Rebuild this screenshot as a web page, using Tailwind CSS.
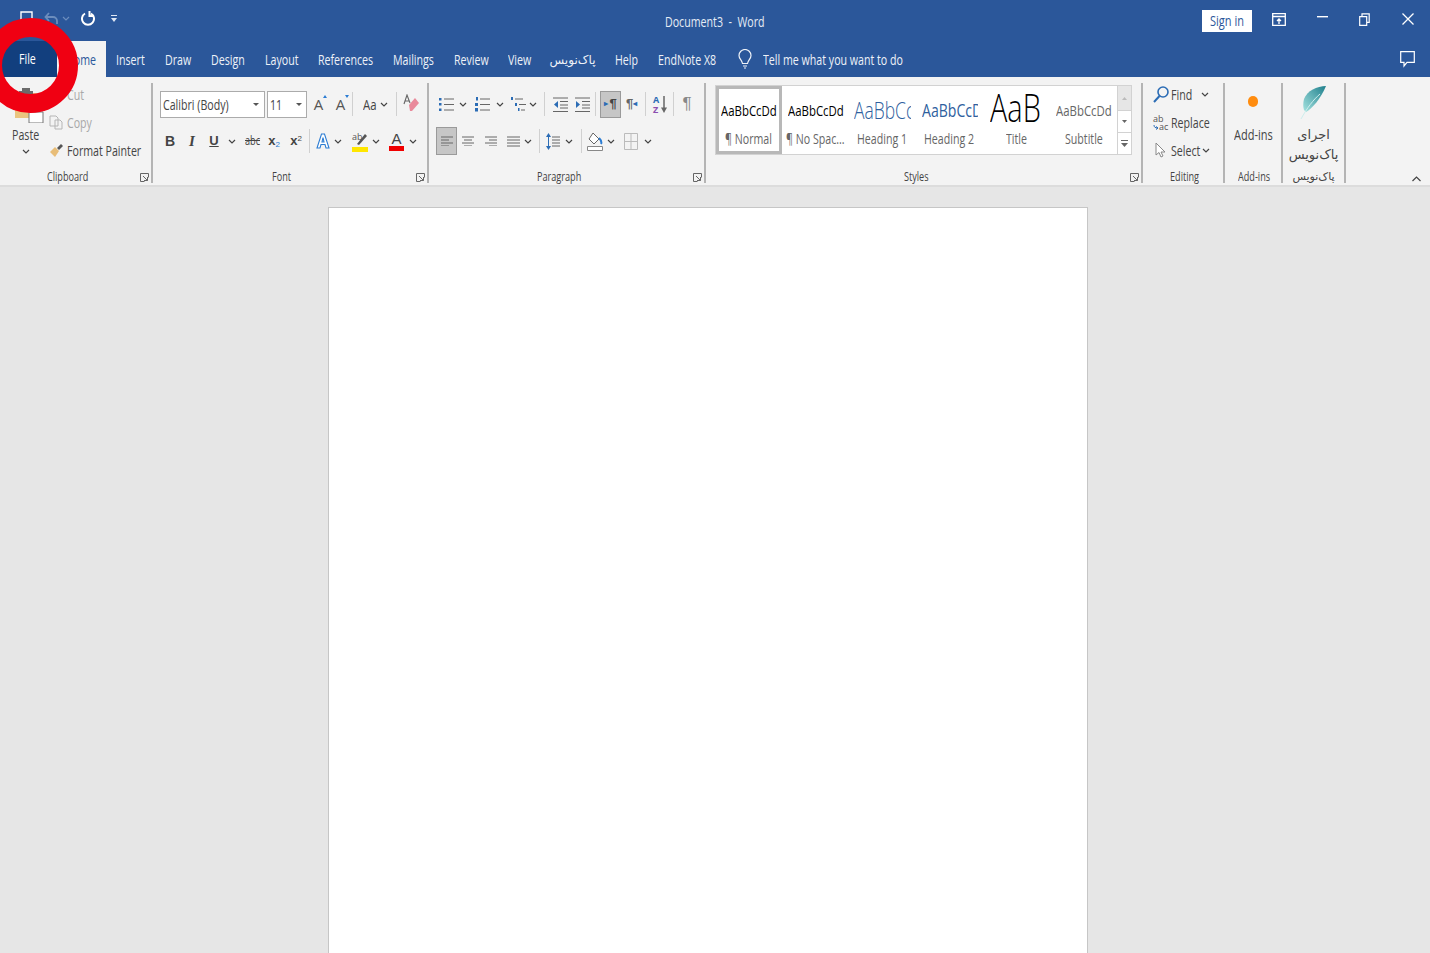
<!DOCTYPE html>
<html lang="en">
<head>
  <meta charset="UTF-8">
  <title>Document3 - Word</title>
  <script src="https://cdn.jsdelivr.net/npm/@tailwindcss/browser@4"></script>
</head>
<body class="h-screen overflow-hidden bg-[#e6e6e6] font-['Open_Sans','DejaVu_Sans',sans-serif] text-[#444]">
  <div class="relative flex h-screen flex-col">

    <!-- Title bar -->
    <div class="grid h-[41px] grid-cols-[1fr_auto_1fr] items-center bg-[#2b579a] text-white">
      <div class="flex items-center pl-[20px] pb-[5px]">
        <svg class="h-[14px] w-[13px]" viewBox="0 0 13 14"><path d="M1 1h11v12H1z" fill="none" stroke="#fff" stroke-width="1.4"/></svg>
        <svg class="ml-[11px] h-[14px] w-[15px]" viewBox="0 0 15 14"><path d="M5 2 1.500 6 5 10M2 6h7a4 4 0 0 1 4 4v3" fill="none" stroke="#6c8dbd" stroke-width="1.800"/></svg>
        <svg class="ml-[3px] h-[5px] w-[8px]" viewBox="0 0 8 5"><path d="m1 1 3 3 3-3" fill="none" stroke="#6c8dbd" stroke-width="1.200"/></svg>
        <svg class="ml-[11px] h-[16px] w-[14px]" viewBox="0 0 14 16"><path d="M4 3.500a6 6 0 1 0 6 0M8.500 1v5h4" fill="none" stroke="#fff" stroke-width="2"/></svg>
        <svg class="ml-[16px] h-[7px] w-[6px]" viewBox="0 0 6 7"><path d="M0 0h6v1H0zM0 3h6L3 7z" fill="#dfe7f3"/></svg>
      </div>
      <div class="pt-[2px] text-[14px] text-[#e6ecf5]"><span class="sq inline-block origin-left scale-x-[.76] whitespace-nowrap">Document3&nbsp; -&nbsp; Word</span></div>
      <div class="flex items-center justify-end pb-[1px]">
        <div class="mt-[2px] mr-[20px] flex h-[22px] w-[50px] items-center justify-center bg-white text-[14.500px] text-[#2b579a]"><span class="sq inline-block origin-left scale-x-[.76] whitespace-nowrap">Sign in</span></div>
        <svg class="mb-[2px] h-[13px] w-[14px]" viewBox="0 0 14 13"><path d="M.700.700h12.600v11.600H.700zM.700 3.500h12.600M7 11V6M5 8l2-2 2 2" fill="none" stroke="#fff" stroke-width="1.300"/></svg>
        <svg class="ml-[31px] mb-[6px] h-[2px] w-[11px]" viewBox="0 0 11 2"><path d="M0 0h11v1.400H0z" fill="#fff"/></svg>
        <svg class="ml-[31px] mb-[2px] h-[13px] w-[11px]" viewBox="0 0 11 13"><path d="M.700 3.700h7v8.600h-7zM3 3.500V.800h7.200v8.500H8" fill="none" stroke="#fff" stroke-width="1.200"/></svg>
        <svg class="ml-[32px] mr-[16px] mb-[3px] h-[12px] w-[12px]" viewBox="0 0 12 12"><path d="m.500.500 11 11m0-11-11 11" stroke="#fff" stroke-width="1.300"/></svg>
      </div>
    </div>

    <!-- Tabs -->
    <div class="flex h-[36px] items-stretch bg-[#2b579a] text-[14px] text-[#eef2f8]">
      <div class="flex w-[57px] items-center justify-center bg-[#123f7e] pr-[3px] pb-[2px] text-white"><span class="sq inline-block origin-left scale-x-[.76] whitespace-nowrap">File</span></div>
      <div class="flex w-[49px] items-center justify-center bg-[#f3f3f3] pt-[1px] text-[#2b579a]"><span class="sq inline-block origin-left scale-x-[.76] whitespace-nowrap">Home</span></div>
      <div class="flex items-center px-[10px] pt-[1px]"><span class="sq inline-block origin-left scale-x-[.76] whitespace-nowrap">Insert</span></div>
      <div class="flex items-center px-[10px] pt-[1px]"><span class="sq inline-block origin-left scale-x-[.76] whitespace-nowrap">Draw</span></div>
      <div class="flex items-center px-[10px] pt-[1px]"><span class="sq inline-block origin-left scale-x-[.76] whitespace-nowrap">Design</span></div>
      <div class="flex items-center px-[10px] pt-[1px]"><span class="sq inline-block origin-left scale-x-[.76] whitespace-nowrap">Layout</span></div>
      <div class="flex items-center px-[10px] pt-[1px]"><span class="sq inline-block origin-left scale-x-[.76] whitespace-nowrap">References</span></div>
      <div class="flex items-center px-[10px] pt-[1px]"><span class="sq inline-block origin-left scale-x-[.76] whitespace-nowrap">Mailings</span></div>
      <div class="flex items-center px-[10px] pt-[1px]"><span class="sq inline-block origin-left scale-x-[.76] whitespace-nowrap">Review</span></div>
      <div class="flex items-center px-[10px] pt-[1px]"><span class="sq inline-block origin-left scale-x-[.76] whitespace-nowrap">View</span></div>
      <div class="flex w-[65px] items-center justify-center pt-[1px] text-[12px] whitespace-nowrap" dir="rtl">پاک‌نویس</div>
      <div class="flex items-center px-[10px] pt-[1px]"><span class="sq inline-block origin-left scale-x-[.76] whitespace-nowrap">Help</span></div>
      <div class="flex items-center px-[10px] pt-[1px]"><span class="sq inline-block origin-left scale-x-[.76] whitespace-nowrap">EndNote X8</span></div>
      <div class="ml-[13px] flex items-center">
        <svg class="h-[20px] w-[14px]" viewBox="0 0 14 20"><path d="M4.500 14.500C4 11 1 10 1 6.500a6 6 0 0 1 12 0C13 10 10 11 9.500 14.500zM5 17h4M6 19h2" fill="none" stroke="#eef2f8" stroke-width="1.200"/></svg>
      </div>
      <div class="ml-[11px] flex items-center"><span class="sq inline-block origin-left scale-x-[.76] whitespace-nowrap">Tell me what you want to do</span></div>
      <div class="ml-auto mr-[15px] flex items-center">
        <svg class="h-[17px] w-[15px]" viewBox="0 0 15 17"><path d="M.700.700h13.600v10.600H7L4 15v-3.700H.700z" fill="none" stroke="#fff" stroke-width="1.200"/></svg>
      </div>
    </div>

    <!-- Ribbon -->
    <div class="flex h-[110px] items-start border-b-2 border-[#dcdcdc] bg-[#f3f3f3] text-[14px]">

      <!-- Clipboard -->
      <div class="mt-[6px] flex h-[100px] w-[153px] flex-col border-r-2 border-[#b4b4b4]">
        <div class="flex h-[86px]">
          <div class="flex w-[49px] flex-col items-center pl-[3px]">
            <svg class="mt-[3px] ml-[8px] h-[37px] w-[30px]" viewBox="0 0 30 37"><path d="M0 7h22v25H0z" fill="#eac47f"/><path d="M7 2h8v3h3v5H4V5h3z" fill="#6b6b6b"/><path d="M14 26h14v11H14z" fill="#fff" stroke="#777"/></svg>
            <div class="mt-[4px] leading-[16px]"><span class="sq inline-block origin-left scale-x-[.76] whitespace-nowrap">Paste</span></div>
            <svg class="mt-[6px] h-[5px] w-[8px]" viewBox="0 0 8 5"><path d="m1 1 3 3 3-3" fill="none" stroke="#444" stroke-width="1.200"/></svg>
          </div>
          <div class="mt-[-3px] flex flex-col">
            <div class="flex h-[28px] items-center text-[#a8a8a8]">
              <svg class="h-[15px] w-[15px]" viewBox="0 0 15 15"><path d="m3 1 7 11M10 1 3 12" fill="none" stroke="#b5b5b5" stroke-width="1.200"/></svg>
              <span class="sq ml-[3px] inline-block origin-left scale-x-[.76] whitespace-nowrap">Cut</span>
            </div>
            <div class="flex h-[28px] items-center text-[#a8a8a8]">
              <svg class="h-[15px] w-[15px]" viewBox="0 0 15 15"><path d="M1 1h6l2 2v8H1zM6 5h5l2 2v7H6z" fill="#f3f3f3" stroke="#b5b5b5"/></svg>
              <span class="sq ml-[3px] inline-block origin-left scale-x-[.76] whitespace-nowrap">Copy</span>
            </div>
            <div class="flex h-[28px] items-center">
              <svg class="h-[15px] w-[15px]" viewBox="0 0 15 15"><path d="M1 9l5-5 4 4-4 6z" fill="#e8bd78"/><path d="m8 5 4-4 2 2-4 4z" fill="#555"/></svg>
              <span class="sq ml-[3px] inline-block origin-left scale-x-[.76] whitespace-nowrap">Format Painter</span>
            </div>
          </div>
        </div>
        <div class="flex h-[14px] text-[12px] leading-[16px]">
          <div class="flex-1 pr-[6px] text-center"><span class="sq inline-block origin-left scale-x-[.76] whitespace-nowrap">Clipboard</span></div>
          <svg class="mt-[4px] mr-[2px] h-[9px] w-[9px]" viewBox="0 0 9 9"><path d="M.500 8.500v-8h8M.500 8.500h4M8.500.500v4M3 3l4.500 4.500M7.500 4v3.500H4" fill="none" stroke="#666"/></svg>
        </div>
      </div>

      <!-- Font -->
      <div class="mt-[6px] flex h-[100px] w-[276px] flex-col border-r-2 border-[#b4b4b4]">
        <div class="h-[86px] pt-[7px]">
          <div class="flex h-[28px] items-center pl-[7px]">
            <div class="flex h-[27px] w-[105px] items-center justify-between border border-[#ababab] bg-white pl-[2px] pr-[5px]">
              <span class="sq inline-block origin-left scale-x-[.76] whitespace-nowrap">Calibri (Body)</span>
              <svg class="h-[3px] w-[6px]" viewBox="0 0 6 3"><path d="M0 0h6L3 3z" fill="#555"/></svg>
            </div>
            <div class="ml-[2px] flex h-[27px] w-[40px] items-center justify-between border border-[#ababab] bg-white pl-[2px] pr-[4px]">
              <span class="sq inline-block origin-left scale-x-[.76] whitespace-nowrap">11</span>
              <svg class="h-[3px] w-[6px]" viewBox="0 0 6 3"><path d="M0 0h6L3 3z" fill="#555"/></svg>
            </div>
            <div class="ml-[6px] flex w-[15px] items-start justify-center text-[15px] text-[#555]">A<svg class="mt-[2px] h-[3px] w-[4px]" viewBox="0 0 4 3"><path d="M2 0l2 3H0z" fill="#2b7cd3"/></svg></div>
            <div class="ml-[7px] flex w-[15px] items-start justify-center text-[15px] text-[#555]">A<svg class="mt-[2px] h-[3px] w-[4px]" viewBox="0 0 4 3"><path d="M0 0h4L2 3z" fill="#2b7cd3"/></svg></div>
            <div class="ml-[2px] h-[24px] w-px bg-[#d0d0d0]"></div>
            <div class="ml-[10px] text-[15px] leading-none"><span class="sq inline-block origin-left scale-x-[.76] whitespace-nowrap">Aa</span></div>
            <svg class="ml-[4px] h-[5px] w-[8px]" viewBox="0 0 8 5"><path d="m1 1 3 3 3-3" fill="none" stroke="#444" stroke-width="1.200"/></svg>
            <div class="ml-[8px] h-[24px] w-px bg-[#d0d0d0]"></div>
            <svg class="ml-[6px] h-[20px] w-[16px]" viewBox="0 0 16 20"><path d="m6 11 6-7 4 5-7 8-2 0z" fill="#e98a9b"/><path d="M1 10 4 1l3 8M2 7h4" fill="none" stroke="#666" stroke-width="1.100"/></svg>
          </div>
          <div class="mt-[9px] flex h-[28px] items-center pl-[6px]">
            <div class="w-[22px] text-center font-['Liberation_Sans'] text-[14px] font-bold">B</div>
            <div class="w-[22px] text-center font-['Liberation_Serif'] text-[15px] font-bold italic">I</div>
            <div class="w-[22px] text-center font-['Liberation_Sans'] text-[13px] font-bold underline">U</div>
            <svg class="ml-[3px] h-[5px] w-[8px]" viewBox="0 0 8 5"><path d="m1 1 3 3 3-3" fill="none" stroke="#444" stroke-width="1.200"/></svg>
            <div class="ml-[5px] w-[22px] text-center text-[12px]"><span class="sq inline-block origin-left scale-x-[.76] whitespace-nowrap line-through">abc</span></div>
            <div class="w-[22px] text-center font-['Liberation_Sans'] text-[13px] font-bold">x<sub class="text-[8px] font-normal text-[#2b7cd3]">2</sub></div>
            <div class="w-[22px] text-center font-['Liberation_Sans'] text-[13px] font-bold">x<sup class="text-[8px] font-normal">2</sup></div>
            <div class="ml-[2px] h-[24px] w-px bg-[#d0d0d0]"></div>
            <svg class="ml-[6px] h-[20px] w-[14px]" viewBox="0 0 14 20"><path d="M5.500 3h3l4.500 14h-3l-1-3.500H5L4 17H1zM6 11h2L7 6.500z" fill="#fff" stroke="#2b7cd3" stroke-width="1.100"/></svg>
            <svg class="ml-[4px] h-[5px] w-[8px]" viewBox="0 0 8 5"><path d="m1 1 3 3 3-3" fill="none" stroke="#444" stroke-width="1.200"/></svg>
            <svg class="ml-[10px] h-[21px] w-[16px] overflow-visible" viewBox="0 0 16 21"><path d="M0 16h16v5H0z" fill="#ffe600"/><path d="M5 13 13 3l2 2-8 9z" fill="#555"/><text x="0" y="9" font-size="9" fill="#555">ab</text></svg>
            <svg class="ml-[4px] h-[5px] w-[8px]" viewBox="0 0 8 5"><path d="m1 1 3 3 3-3" fill="none" stroke="#444" stroke-width="1.200"/></svg>
            <div class="ml-[9px] flex w-[15px] flex-col items-center">
              <span class="font-['Liberation_Sans'] text-[15px] leading-[15px]">A</span>
              <span class="h-[5px] w-[15px] bg-[#f00000]"></span>
            </div>
            <svg class="ml-[5px] h-[5px] w-[8px]" viewBox="0 0 8 5"><path d="m1 1 3 3 3-3" fill="none" stroke="#444" stroke-width="1.200"/></svg>
          </div>
        </div>
        <div class="flex h-[14px] text-[12px] leading-[16px]">
          <div class="flex-1 pr-[6px] text-center"><span class="sq inline-block origin-left scale-x-[.76] whitespace-nowrap">Font</span></div>
          <svg class="mt-[4px] mr-[2px] h-[9px] w-[9px]" viewBox="0 0 9 9"><path d="M.500 8.500v-8h8M.500 8.500h4M8.500.500v4M3 3l4.500 4.500M7.500 4v3.500H4" fill="none" stroke="#666"/></svg>
        </div>
      </div>

      <!-- Paragraph -->
      <div class="mt-[6px] flex h-[100px] w-[277px] flex-col border-r-2 border-[#b4b4b4]">
        <div class="h-[86px] pt-[7px]">
          <div class="flex h-[28px] items-center pl-[10px]">
            <svg class="h-[15px] w-[15px]" viewBox="0 0 15 15"><path d="M5 2h10M5 7.500h10M5 13h10" stroke="#666"/><path d="M0 1h2.500v2.500H0zM0 6h2.500v2.500H0zM0 11.500h2.500V14H0z" fill="#2b6cb5"/></svg>
            <svg class="ml-[5px] h-[5px] w-[8px]" viewBox="0 0 8 5"><path d="m1 1 3 3 3-3" fill="none" stroke="#444" stroke-width="1.200"/></svg>
            <svg class="ml-[8px] h-[15px] w-[15px]" viewBox="0 0 15 15"><path d="M5 2h10M5 7.500h10M5 13h10" stroke="#666"/><path d="M1 0h2v3.500H1zM0 6h3v3H0zM0 11h3v3.500H0z" fill="#2b6cb5"/></svg>
            <svg class="ml-[6px] h-[5px] w-[8px]" viewBox="0 0 8 5"><path d="m1 1 3 3 3-3" fill="none" stroke="#444" stroke-width="1.200"/></svg>
            <svg class="ml-[7px] h-[15px] w-[15px]" viewBox="0 0 15 15"><path d="M4 2h8M8 7.500h7M10 13h4" stroke="#666"/><path d="M0 0h2v3H0zM4 6h2v3H4zM7 11h1.500v3H7z" fill="#2b6cb5"/></svg>
            <svg class="ml-[3px] h-[5px] w-[8px]" viewBox="0 0 8 5"><path d="m1 1 3 3 3-3" fill="none" stroke="#444" stroke-width="1.200"/></svg>
            <div class="ml-[7px] h-[24px] w-px bg-[#d0d0d0]"></div>
            <svg class="ml-[8px] h-[15px] w-[15px]" viewBox="0 0 15 15"><path d="M0 1h15M7 4.500h8M7 8h8M7 11h8M0 14.500h15" stroke="#666"/><path d="M5 4 1 7.500 5 11z" fill="#2b6cb5"/></svg>
            <svg class="ml-[7px] h-[15px] w-[15px]" viewBox="0 0 15 15"><path d="M0 1h15M7 4.500h8M7 8h8M7 11h8M0 14.500h15" stroke="#666"/><path d="M1 4l4 3.500L1 11z" fill="#2b6cb5"/></svg>
            <div class="ml-[5px] h-[24px] w-px bg-[#d0d0d0]"></div>
            <div class="ml-[4px] flex h-[27px] w-[21px] items-center justify-center border border-[#9a9a9a] bg-[#c6c6c6] font-['Liberation_Sans'] text-[13px] font-bold"><span class="mr-[1px] text-[8px] text-[#2b6cb5]">▸</span>¶</div>
            <div class="ml-[2px] flex w-[17px] items-center justify-center font-['Liberation_Sans'] text-[13px] font-bold text-[#666]">¶<span class="text-[8px] text-[#2b6cb5]">◂</span></div>
            <div class="ml-[5px] h-[24px] w-px bg-[#d0d0d0]"></div>
            <svg class="ml-[7px] h-[19px] w-[15px] overflow-visible" viewBox="0 0 15 19"><text x="0" y="8" font-size="9" font-weight="700" fill="#2b6cb5">A</text><text x="0" y="18" font-size="9" font-weight="700" fill="#8b4fb0">Z</text><path d="M11 1v15" stroke="#666" stroke-width="1.500"/><path d="M8 12.500h6L11 18z" fill="#666"/></svg>
            <div class="ml-[5px] h-[24px] w-px bg-[#d0d0d0]"></div>
            <div class="ml-[6px] w-[14px] text-center font-['Liberation_Sans'] text-[17px] text-[#888]">¶</div>
          </div>
          <div class="mt-[9px] flex h-[28px] items-center pl-[7px]">
            <div class="flex h-[28px] w-[21px] items-center justify-center border border-[#9a9a9a] bg-[#c6c6c6]">
              <svg class="h-[10px] w-[12px]" viewBox="0 0 12 10"><path d="M0 1h12M0 4h8M0 7h12M0 10h8" stroke="#666"/></svg>
            </div>
            <svg class="ml-[5px] h-[10px] w-[12px]" viewBox="0 0 12 10"><path d="M0 1h12M2 4h8M0 7h12M2 10h8" stroke="#666"/></svg>
            <svg class="ml-[11px] h-[10px] w-[12px]" viewBox="0 0 12 10"><path d="M0 1h12M4 4h8M0 7h12M4 10h8" stroke="#666"/></svg>
            <svg class="ml-[10px] h-[11px] w-[13px]" viewBox="0 0 13 11"><path d="M0 1h13M0 4h13M0 7h13M0 10h13" stroke="#666"/></svg>
            <svg class="ml-[4px] h-[5px] w-[8px]" viewBox="0 0 8 5"><path d="m1 1 3 3 3-3" fill="none" stroke="#444" stroke-width="1.200"/></svg>
            <div class="ml-[7px] h-[24px] w-px bg-[#d0d0d0]"></div>
            <svg class="ml-[6px] h-[17px] w-[14px]" viewBox="0 0 14 17"><path d="M6 4h8M6 7h8M6 10h8M6 13h8" stroke="#666"/><path d="M2.500 0 5 4H0zM0 13h5l-2.500 4zM2 4h1v9H2z" fill="#2b6cb5"/></svg>
            <svg class="ml-[5px] h-[5px] w-[8px]" viewBox="0 0 8 5"><path d="m1 1 3 3 3-3" fill="none" stroke="#444" stroke-width="1.200"/></svg>
            <div class="ml-[8px] h-[24px] w-px bg-[#d0d0d0]"></div>
            <svg class="ml-[5px] h-[19px] w-[16px]" viewBox="0 0 16 19"><path d="M.500 14.500h15v4H.500z" fill="#fff" stroke="#888"/><path d="m6 1 6 6-5 5-5-5z" fill="#fff" stroke="#666"/><path d="M12 6c2 2 3 4 2 6" fill="none" stroke="#2b7cd3" stroke-width="2"/></svg>
            <svg class="ml-[4px] h-[5px] w-[8px]" viewBox="0 0 8 5"><path d="m1 1 3 3 3-3" fill="none" stroke="#444" stroke-width="1.200"/></svg>
            <svg class="ml-[9px] h-[17px] w-[14px]" viewBox="0 0 14 17"><path d="M.500.500h13v16H.500zM7 .500v16M.500 8.500h13" fill="none" stroke="#bbb"/></svg>
            <svg class="ml-[6px] h-[5px] w-[8px]" viewBox="0 0 8 5"><path d="m1 1 3 3 3-3" fill="none" stroke="#444" stroke-width="1.200"/></svg>
          </div>
        </div>
        <div class="flex h-[14px] text-[12px] leading-[16px]">
          <div class="flex-1 pr-[6px] text-center"><span class="sq inline-block origin-left scale-x-[.76] whitespace-nowrap">Paragraph</span></div>
          <svg class="mt-[4px] mr-[2px] h-[9px] w-[9px]" viewBox="0 0 9 9"><path d="M.500 8.500v-8h8M.500 8.500h4M8.500.500v4M3 3l4.500 4.500M7.500 4v3.500H4" fill="none" stroke="#666"/></svg>
        </div>
      </div>

      <!-- Styles -->
      <div class="mt-[6px] flex h-[100px] w-[437px] flex-col border-r-2 border-[#b4b4b4]">
        <div class="h-[86px] pl-[9px] pt-[2px]">
          <div class="flex h-[70px] w-[417px] border border-[#d2d2d2] bg-white">
            <div class="flex w-[66px] flex-col items-center border-[3px] border-[#b8b8b8]">
              <div class="mt-[10px] h-[22px] text-[15px] leading-[22px] text-black"><span class="sq inline-block origin-left scale-x-[.76] whitespace-nowrap">AaBbCcDd</span></div>
              <div class="mt-[9px] leading-[18px] text-[#666]"><span class="sq inline-block origin-left scale-x-[.76] whitespace-nowrap">¶ Normal</span></div>
            </div>
            <div class="flex w-[67px] flex-col items-center pt-[13px]">
              <div class="h-[22px] text-[15px] leading-[22px] text-black"><span class="sq inline-block origin-left scale-x-[.76] whitespace-nowrap">AaBbCcDd</span></div>
              <div class="mt-[9px] leading-[18px] text-[#666]"><span class="sq inline-block origin-left scale-x-[.76] whitespace-nowrap">¶ No Spac...</span></div>
            </div>
            <div class="flex w-[67px] flex-col items-center pt-[12px]">
              <div class="h-[24px] w-[57px] overflow-hidden text-[23px] leading-[24px] font-light text-[#2f5f9e]"><span class="sq inline-block origin-left scale-x-[.76] whitespace-nowrap">AaBbCc</span></div>
              <div class="mt-[8px] leading-[18px] text-[#666]"><span class="sq inline-block origin-left scale-x-[.76] whitespace-nowrap">Heading 1</span></div>
            </div>
            <div class="flex w-[67px] flex-col items-center pt-[13px]">
              <div class="h-[22px] w-[56px] overflow-hidden text-[18.500px] leading-[22px] text-[#2f5f9e]"><span class="sq inline-block origin-left scale-x-[.76] whitespace-nowrap">AaBbCcD</span></div>
              <div class="mt-[9px] leading-[18px] text-[#666]"><span class="sq inline-block origin-left scale-x-[.76] whitespace-nowrap">Heading 2</span></div>
            </div>
            <div class="flex w-[67px] flex-col items-center pt-[7px]">
              <div class="h-[29px] w-[54px] overflow-hidden text-[38px] leading-[29px] font-light text-black"><span class="sq inline-block origin-left scale-x-[.76] whitespace-nowrap">AaB</span></div>
              <div class="mt-[8px] leading-[18px] text-[#666]"><span class="sq inline-block origin-left scale-x-[.76] whitespace-nowrap">Title</span></div>
            </div>
            <div class="flex w-[67px] flex-col items-center pt-[13px]">
              <div class="h-[22px] text-[15px] leading-[22px] text-[#666]"><span class="sq inline-block origin-left scale-x-[.76] whitespace-nowrap">AaBbCcDd</span></div>
              <div class="mt-[9px] leading-[18px] text-[#666]"><span class="sq inline-block origin-left scale-x-[.76] whitespace-nowrap">Subtitle</span></div>
            </div>
            <div class="flex flex-1 flex-col border-l border-[#d2d2d2]">
              <div class="flex h-[25px] items-center justify-center border-b border-[#d2d2d2] bg-[#e6e6e6]">
                <svg class="h-[3px] w-[5px]" viewBox="0 0 5 3"><path d="M2.500 0 5 3H0z" fill="#bbb"/></svg>
              </div>
              <div class="flex h-[22px] items-center justify-center border-b border-[#d2d2d2]">
                <svg class="h-[3px] w-[5px]" viewBox="0 0 5 3"><path d="M0 0h5L2.500 3z" fill="#666"/></svg>
              </div>
              <div class="flex flex-1 items-center justify-center">
                <svg class="h-[7px] w-[7px]" viewBox="0 0 7 7"><path d="M0 0h7v1H0zM0 3h7L3.500 7z" fill="#666"/></svg>
              </div>
            </div>
          </div>
        </div>
        <div class="flex h-[14px] text-[12px] leading-[16px]">
          <div class="flex-1 pr-[6px] text-center"><span class="sq inline-block origin-left scale-x-[.76] whitespace-nowrap">Styles</span></div>
          <svg class="mt-[4px] mr-[2px] h-[9px] w-[9px]" viewBox="0 0 9 9"><path d="M.500 8.500v-8h8M.500 8.500h4M8.500.500v4M3 3l4.500 4.500M7.500 4v3.500H4" fill="none" stroke="#666"/></svg>
        </div>
      </div>

      <!-- Editing -->
      <div class="mt-[6px] flex h-[100px] w-[82px] flex-col border-r-2 border-[#b4b4b4]">
        <div class="mt-[-3px] flex h-[89px] flex-col pl-[10px]">
          <div class="flex h-[28px] items-center">
            <svg class="h-[17px] w-[16px]" viewBox="0 0 16 17"><circle cx="10" cy="6" r="5" fill="none" stroke="#2b6cb5" stroke-width="1.600"/><path d="M6.500 10 1 16" stroke="#2b6cb5" stroke-width="2"/></svg>
            <span class="sq ml-[2px] inline-block origin-left scale-x-[.76] whitespace-nowrap">Find</span>
            <svg class="ml-[9px] h-[5px] w-[8px]" viewBox="0 0 8 5"><path d="m1 1 3 3 3-3" fill="none" stroke="#444" stroke-width="1.200"/></svg>
          </div>
          <div class="flex h-[28px] items-center">
            <svg class="h-[17px] w-[16px] overflow-visible" viewBox="0 0 16 17"><text x="0" y="8" font-size="9" fill="#555">ab</text><text x="6" y="16" font-size="9" fill="#555">ac</text><path d="M1 11c0 2 1 3 4 3M3 12.500 5 14l-2 1.500" fill="none" stroke="#2b6cb5"/></svg>
            <span class="sq ml-[2px] inline-block origin-left scale-x-[.76] whitespace-nowrap">Replace</span>
          </div>
          <div class="flex h-[28px] items-center">
            <svg class="h-[17px] w-[16px]" viewBox="0 0 16 17"><path d="M3 1v12l3-2.500L8 15l2-1-2-4h4z" fill="#fff" stroke="#888"/></svg>
            <span class="sq ml-[2px] inline-block origin-left scale-x-[.76] whitespace-nowrap">Select</span>
            <svg class="ml-[2px] h-[5px] w-[8px]" viewBox="0 0 8 5"><path d="m1 1 3 3 3-3" fill="none" stroke="#444" stroke-width="1.200"/></svg>
          </div>
        </div>
        <div class="h-[14px] text-center text-[12px] leading-[16px]"><span class="sq inline-block origin-left scale-x-[.76] whitespace-nowrap">Editing</span></div>
      </div>

      <!-- Add-ins -->
      <div class="mt-[6px] flex h-[100px] w-[58px] flex-col border-r-2 border-[#b4b4b4]">
        <div class="flex h-[86px] flex-col items-center">
          <div class="mt-[13px] h-[11px] w-[10px] rounded-full bg-[#ff8c0f]"></div>
          <div class="mt-[19px] text-[14.500px] leading-[18px]"><span class="sq inline-block origin-left scale-x-[.76] whitespace-nowrap">Add-ins</span></div>
        </div>
        <div class="h-[14px] text-center text-[12px] leading-[16px]"><span class="sq inline-block origin-left scale-x-[.76] whitespace-nowrap">Add-ins</span></div>
      </div>

      <!-- Paknevis -->
      <div class="mt-[6px] flex h-[100px] w-[63px] flex-col border-r-2 border-[#b4b4b4]">
        <div class="flex h-[86px] flex-col items-center" dir="rtl">
          <svg class="mt-[3px] h-[34px] w-[28px]" viewBox="0 0 28 34">
            <defs><linearGradient id="feather" x1="1" y1="0" x2="0" y2="1"><stop offset="0" stop-color="#1f7f8c"/><stop offset="1" stop-color="#a5e3e0"/></linearGradient></defs>
            <path d="M26 0C17 0 7 5 4 13c-1 4-1 8 0 11l2 2C12 23 21 12 26 0z" fill="url(#feather)"/>
            <path d="M20 8C13 14 7 22 1 33" fill="none" stroke="#cdeeed" stroke-width="1"/>
          </svg>
          <div class="mt-[5px] font-['DejaVu_Sans'] text-[13px] leading-[20px]">اجرای</div>
          <div class="font-['DejaVu_Sans'] text-[13px] leading-[20px] whitespace-nowrap">پاک‌نویس</div>
        </div>
        <div class="h-[14px] text-center font-['DejaVu_Sans'] text-[11px] leading-[16px] whitespace-nowrap" dir="rtl">پاک‌نویس</div>
      </div>

      <div class="flex h-[100px] flex-1 items-end justify-end self-end pr-[9px] pb-[3px]">
        <svg class="h-[6px] w-[9px]" viewBox="0 0 9 6"><path d="m.500 5 4-4 4 4" fill="none" stroke="#444" stroke-width="1.200"/></svg>
      </div>
    </div>

    <!-- Document -->
    <div class="flex-1 overflow-hidden pl-[328px] pt-[20px]">
      <div class="h-[900px] w-[760px] border border-[#c6c6c6] bg-white"></div>
    </div>

    <!-- Red annotation ring -->
    <svg class="pointer-events-none absolute left-0 top-0 h-[120px] w-[90px]" viewBox="0 0 90 120">
      <circle cx="30.500" cy="65.500" r="38" fill="none" stroke="#f00012" stroke-width="19"/>
    </svg>
  </div>

  <script>
    // the reference is squeezed horizontally, take the scaled-away width out of the flow
    document.querySelectorAll(".sq").forEach((el) => {
      el.style.marginRight = -(el.offsetWidth * 0.24) + "px";
    });
  </script>
</body>
</html>
